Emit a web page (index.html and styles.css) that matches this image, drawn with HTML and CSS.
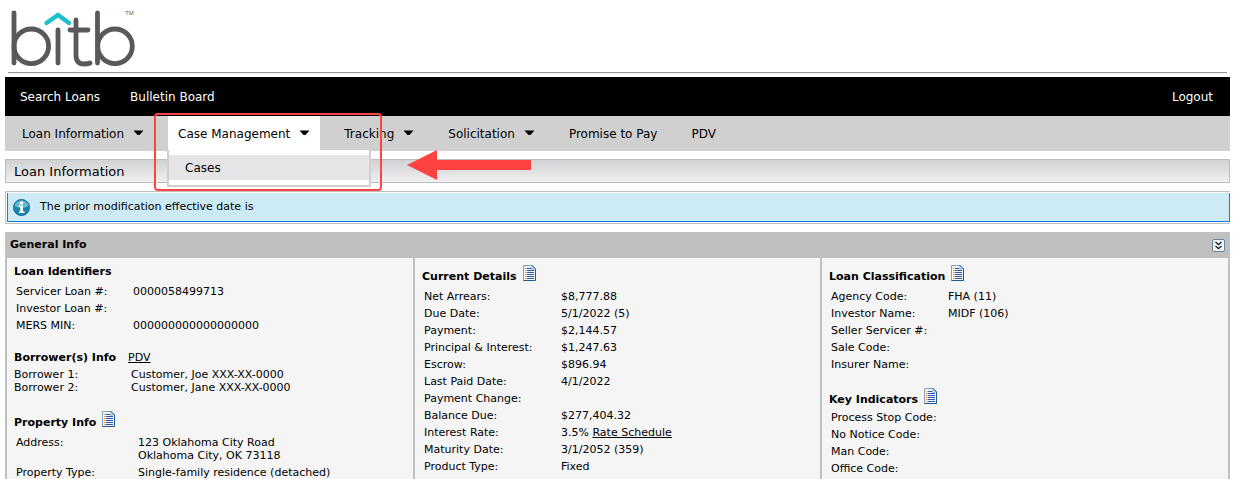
FILE: index.html
```html
<!DOCTYPE html>
<html lang="en">
<head>
<meta charset="utf-8">
<title>Loan Information</title>
<link rel="stylesheet" href="styles.css">
</head>
<body>
<svg class="defs" aria-hidden="true">
  <symbol id="doc" viewBox="0 0 13 16">
    <path d="M.5 .5H9L12.500 4V15.500H.5Z" fill="#f4f8fd" stroke="#7fa3bf"/>
    <path d="M12.500 4V15.500H.5" fill="none" stroke="#1f5c8b"/>
    <path d="M8 0L13 5V4L9 0Z" fill="#1f5c8b"/>
    <path d="M8 1V5H12Z" fill="#a9c8e0"/>
    <path d="M2 3.500H3.500M2 5.500H3.500M2 7.500H3.500M2 9.500H3.500M2 11.500H3.500M2 13.500H3.500" stroke="#f08a1c"/>
    <path d="M4 3.500H8M4 5.500H11M4 7.500H11M4 9.500H11M4 11.500H11M4 13.500H11" stroke="#2c56b0"/>
  </symbol>
  <symbol id="caret" viewBox="0 0 11 6"><path d="M.5 .5H10.500L6.500 5H4.500Z"/></symbol>
</svg>

<header class="brand">
  <svg class="logo" viewBox="0 0 140 70" role="img" aria-label="bitb">
    <g fill="none" stroke="#58595b" stroke-width="4.800" stroke-linecap="round">
      <path d="M9 13V63"/><circle cx="26.300" cy="46.300" r="17.300"/>
      <path d="M53 30V63"/>
      <path d="M71 20V55Q71 64 79 64Q83 64 85 63M65 30H83"/>
      <path d="M92.500 13V63"/><circle cx="110" cy="46.300" r="17.300"/>
    </g>
    <path d="M41.500 23L53 15L64 23" fill="none" stroke="#1bc1cc" stroke-width="4.400" stroke-linecap="round"/>
    <text class="logo-mark" x="120" y="15">TM</text>
  </svg>
</header>

<nav class="topnav" aria-label="Site">
  <a href="#">Search Loans</a>
  <a href="#">Bulletin Board</a>
  <a class="logout" href="#">Logout</a>
</nav>

<nav class="menu" aria-label="Loan">
  <button class="item" type="button">Loan Information<svg class="caret"><use href="#caret"/></svg></button>
  <div class="group">
    <button class="item item-open" type="button" aria-expanded="true">Case Management<svg class="caret"><use href="#caret"/></svg></button>
    <div class="dropdown"><a href="#">Cases</a></div>
    <div class="highlight"></div>
    <svg class="pointer" viewBox="0 0 124 30" aria-hidden="true"><path d="M0 15L30 0V10H124V20H30V30Z" fill="#ff4242"/></svg>
  </div>
  <button class="item" type="button">Tracking<svg class="caret"><use href="#caret"/></svg></button>
  <button class="item" type="button">Solicitation<svg class="caret"><use href="#caret"/></svg></button>
  <a class="item" href="#">Promise to Pay</a>
  <a class="item" href="#">PDV</a>
</nav>

<main>
  <h1 class="title">Loan Information</h1>

  <div class="alert" role="status">
    <div class="alert-body">
      <svg class="info" viewBox="0 0 17 17" aria-hidden="true">
        <circle cx="8.500" cy="8.500" r="8" fill="#1b84ad" stroke="#0d6a93"/>
        <path d="M1.500 7A7.200 7.200 0 0 1 15.500 7Q9 11 1.500 7Z" fill="#69b8d5"/>
        <circle cx="8.500" cy="4" r="1.800" fill="#fff"/>
        <path d="M6 6.500H10V12.500H11.500V14H6V12.500H7.300V8H6Z" fill="#fff"/>
      </svg>
      <span>The prior modification effective date is</span>
    </div>
  </div>

  <section class="panel">
    <header class="panel-head">
      <h2>General Info</h2>
      <button class="collapse" type="button" aria-label="Collapse">
        <svg viewBox="0 0 13 13"><rect x=".5" y=".5" width="12" height="12" rx="1.500" fill="#eef6fb" stroke="#66869c"/><path d="M3.500 3L6.500 5.500L9.500 3M3.500 7L6.500 9.500L9.500 7" fill="none" stroke="#222" stroke-width="1.400"/></svg>
      </button>
    </header>
    <div class="columns">
      <div class="column">
        <section>
          <h3>Loan Identifiers</h3>
          <table>
            <tr><th scope="row">Servicer Loan #:</th><td>0000058499713</td></tr>
            <tr><th scope="row">Investor Loan #:</th><td></td></tr>
            <tr><th scope="row">MERS MIN:</th><td>000000000000000000</td></tr>
          </table>
        </section>
        <section class="compact">
          <h3>Borrower(s) Info <a href="#">PDV</a></h3>
          <table>
            <tr><th scope="row">Borrower 1:</th><td>Customer, Joe XXX-XX-0000</td></tr>
            <tr><th scope="row">Borrower 2:</th><td>Customer, Jane XXX-XX-0000</td></tr>
          </table>
        </section>
        <section class="property">
          <h3 class="with-icon">Property Info <svg class="doc"><use href="#doc"/></svg></h3>
          <table>
            <tr><th scope="row">Address:</th><td>123 Oklahoma City Road<br>Oklahoma City, OK 73118</td></tr>
            <tr><th scope="row">Property Type:</th><td>Single-family residence (detached)</td></tr>
          </table>
        </section>
      </div>
      <div class="column">
        <section class="details">
          <h3 class="with-icon">Current Details <svg class="doc"><use href="#doc"/></svg></h3>
          <table>
            <tr><th scope="row">Net Arrears:</th><td>$8,777.88</td></tr>
            <tr><th scope="row">Due Date:</th><td>5/1/2022 (5)</td></tr>
            <tr><th scope="row">Payment:</th><td>$2,144.57</td></tr>
            <tr><th scope="row">Principal &amp; Interest:</th><td>$1,247.63</td></tr>
            <tr><th scope="row">Escrow:</th><td>$896.94</td></tr>
            <tr><th scope="row">Last Paid Date:</th><td>4/1/2022</td></tr>
            <tr><th scope="row">Payment Change:</th><td></td></tr>
            <tr><th scope="row">Balance Due:</th><td>$277,404.32</td></tr>
            <tr><th scope="row">Interest Rate:</th><td>3.5% <a href="#">Rate Schedule</a></td></tr>
            <tr><th scope="row">Maturity Date:</th><td>3/1/2052 (359)</td></tr>
            <tr><th scope="row">Product Type:</th><td>Fixed</td></tr>
          </table>
        </section>
      </div>
      <div class="column column-tight">
        <section>
          <h3 class="with-icon">Loan Classification <svg class="doc"><use href="#doc"/></svg></h3>
          <table>
            <tr><th scope="row">Agency Code:</th><td>FHA (11)</td></tr>
            <tr><th scope="row">Investor Name:</th><td>MIDF (106)</td></tr>
            <tr><th scope="row">Seller Servicer #:</th><td></td></tr>
            <tr><th scope="row">Sale Code:</th><td></td></tr>
            <tr><th scope="row">Insurer Name:</th><td></td></tr>
          </table>
        </section>
        <section class="indicators">
          <h3 class="with-icon">Key Indicators <svg class="doc"><use href="#doc"/></svg></h3>
          <table>
            <tr><th scope="row">Process Stop Code:</th><td></td></tr>
            <tr><th scope="row">No Notice Code:</th><td></td></tr>
            <tr><th scope="row">Man Code:</th><td></td></tr>
            <tr><th scope="row">Office Code:</th><td></td></tr>
          </table>
        </section>
      </div>
    </div>
  </section>
</main>
</body>
</html>
```

FILE: styles.css
```css
* { box-sizing: border-box; }

body {
  margin: 0 5px;
  background: #fff;
  color: #000;
  font: 11px/13px Verdana, "DejaVu Sans", sans-serif;
}

a { color: inherit; }
button { font: inherit; color: inherit; border: 0; padding: 0; background: none; cursor: pointer; }
h1, h2, h3 { margin: 0; }
.defs { display: none; }

.brand {
  margin: 0 3px 4px;
  padding-bottom: 2px;
  border-bottom: 1px solid #9a9a9a;
  box-shadow: 0 1px #ededed;
}
.logo { display: block; width: 140px; height: 70px; margin-left: -3px; }
.logo-mark { font: 6px "Liberation Sans", sans-serif; fill: #58595b; }

.topnav {
  display: flex;
  align-items: center;
  gap: 30px;
  height: 39px;
  padding: 2px 17px 0 15px;
  background: #000;
  color: #fff;
  font-size: 12px;
}
.topnav a { text-decoration: none; }
.logout { margin-left: auto; }

.menu {
  display: flex;
  gap: 14px;
  height: 35px;
  padding-left: 7px;
  background: #d0d0d0;
  font-size: 12px;
}
.item {
  display: flex;
  align-items: center;
  gap: 9px;
  height: 34px;
  padding: 2px 10px 0;
  text-decoration: none;
  white-space: nowrap;
}
.item-open { background: #fff; }
.caret { width: 11px; height: 6px; margin-bottom: 2px; }
.group { position: relative; }
.dropdown {
  position: absolute;
  z-index: 1;
  top: 34px;
  left: -1px;
  width: 204px;
  padding: 5px 0;
  background: #fff;
  border: solid #cfcfcf;
  border-width: 0 2px 2px;
}
.dropdown a {
  display: block;
  padding: 2px 16px 0;
  line-height: 23px;
  background: #e6e4e6;
  text-decoration: none;
}
.highlight {
  position: absolute;
  z-index: 2;
  top: -3px;
  left: -14px;
  width: 228px;
  height: 78px;
  border: 2px solid #ff4242;
  border-radius: 4px;
  pointer-events: none;
}
.pointer {
  position: absolute;
  z-index: 2;
  top: 34px;
  left: 239px;
  width: 124px;
  height: 30px;
}

.title {
  margin-top: 8px;
  padding: 2px 8px 0;
  border: 1px solid #bdbdbd;
  background: linear-gradient(#d0d1d3, #f0f0f1);
  font-size: 13px;
  font-weight: normal;
  line-height: 20px;
}

.alert {
  margin: 8px -2px 8px 0;
  padding: 1px;
  border: 1px solid #c0c0c0;
}
.alert-body {
  display: flex;
  align-items: center;
  gap: 10px;
  height: 29px;
  padding: 0 5px;
  border: solid #0a7ff0;
  border-width: 0 1px 1px;
  background: #cdebf5;
}
.alert-body span { padding-bottom: 2px; }
.info { width: 17px; height: 17px; }

.panel { border: 2px solid #c0c0c0; border-width: 0 2px; }
.panel-head {
  display: flex;
  align-items: center;
  justify-content: space-between;
  height: 26px;
  padding: 0 3px;
  background: #c0c0c0;
}
h2, h3 { font-size: 11px; font-weight: bold; }
h2 { padding-bottom: 2px; }
.collapse, .collapse svg { display: block; width: 13px; height: 13px; }

.columns { display: grid; grid-template-columns: 406fr 407fr 408fr; background: #f5f5f5; }
.column {
  display: flex;
  flex-direction: column;
  gap: 16px;
  padding: 6px 7px 0;
}
.column + .column { border-left: 2px solid #c0c0c0; }
.column-tight { gap: 14px; }

h3 { display: flex; gap: 12px; padding-bottom: 4px; line-height: 15px; }
h3 a { font-weight: normal; }
.with-icon { align-items: flex-end; gap: 6px; padding-top: 1px; }
.doc { width: 13px; height: 16px; margin-bottom: 3px; }

table { border-collapse: collapse; }
th, td { padding: 2px 0; text-align: left; vertical-align: top; font-weight: normal; white-space: nowrap; }
tr { height: 17px; }
th { width: 119px; padding-left: 2px; }
.property th { width: 124px; }
.details th { width: 139px; }
.compact h3 { padding-bottom: 3px; }
.indicators h3 { padding-bottom: 2px; }
.compact tr { height: 13px; }
.compact th, .compact td { padding: 0; }
.compact th { width: 117px; }
```
